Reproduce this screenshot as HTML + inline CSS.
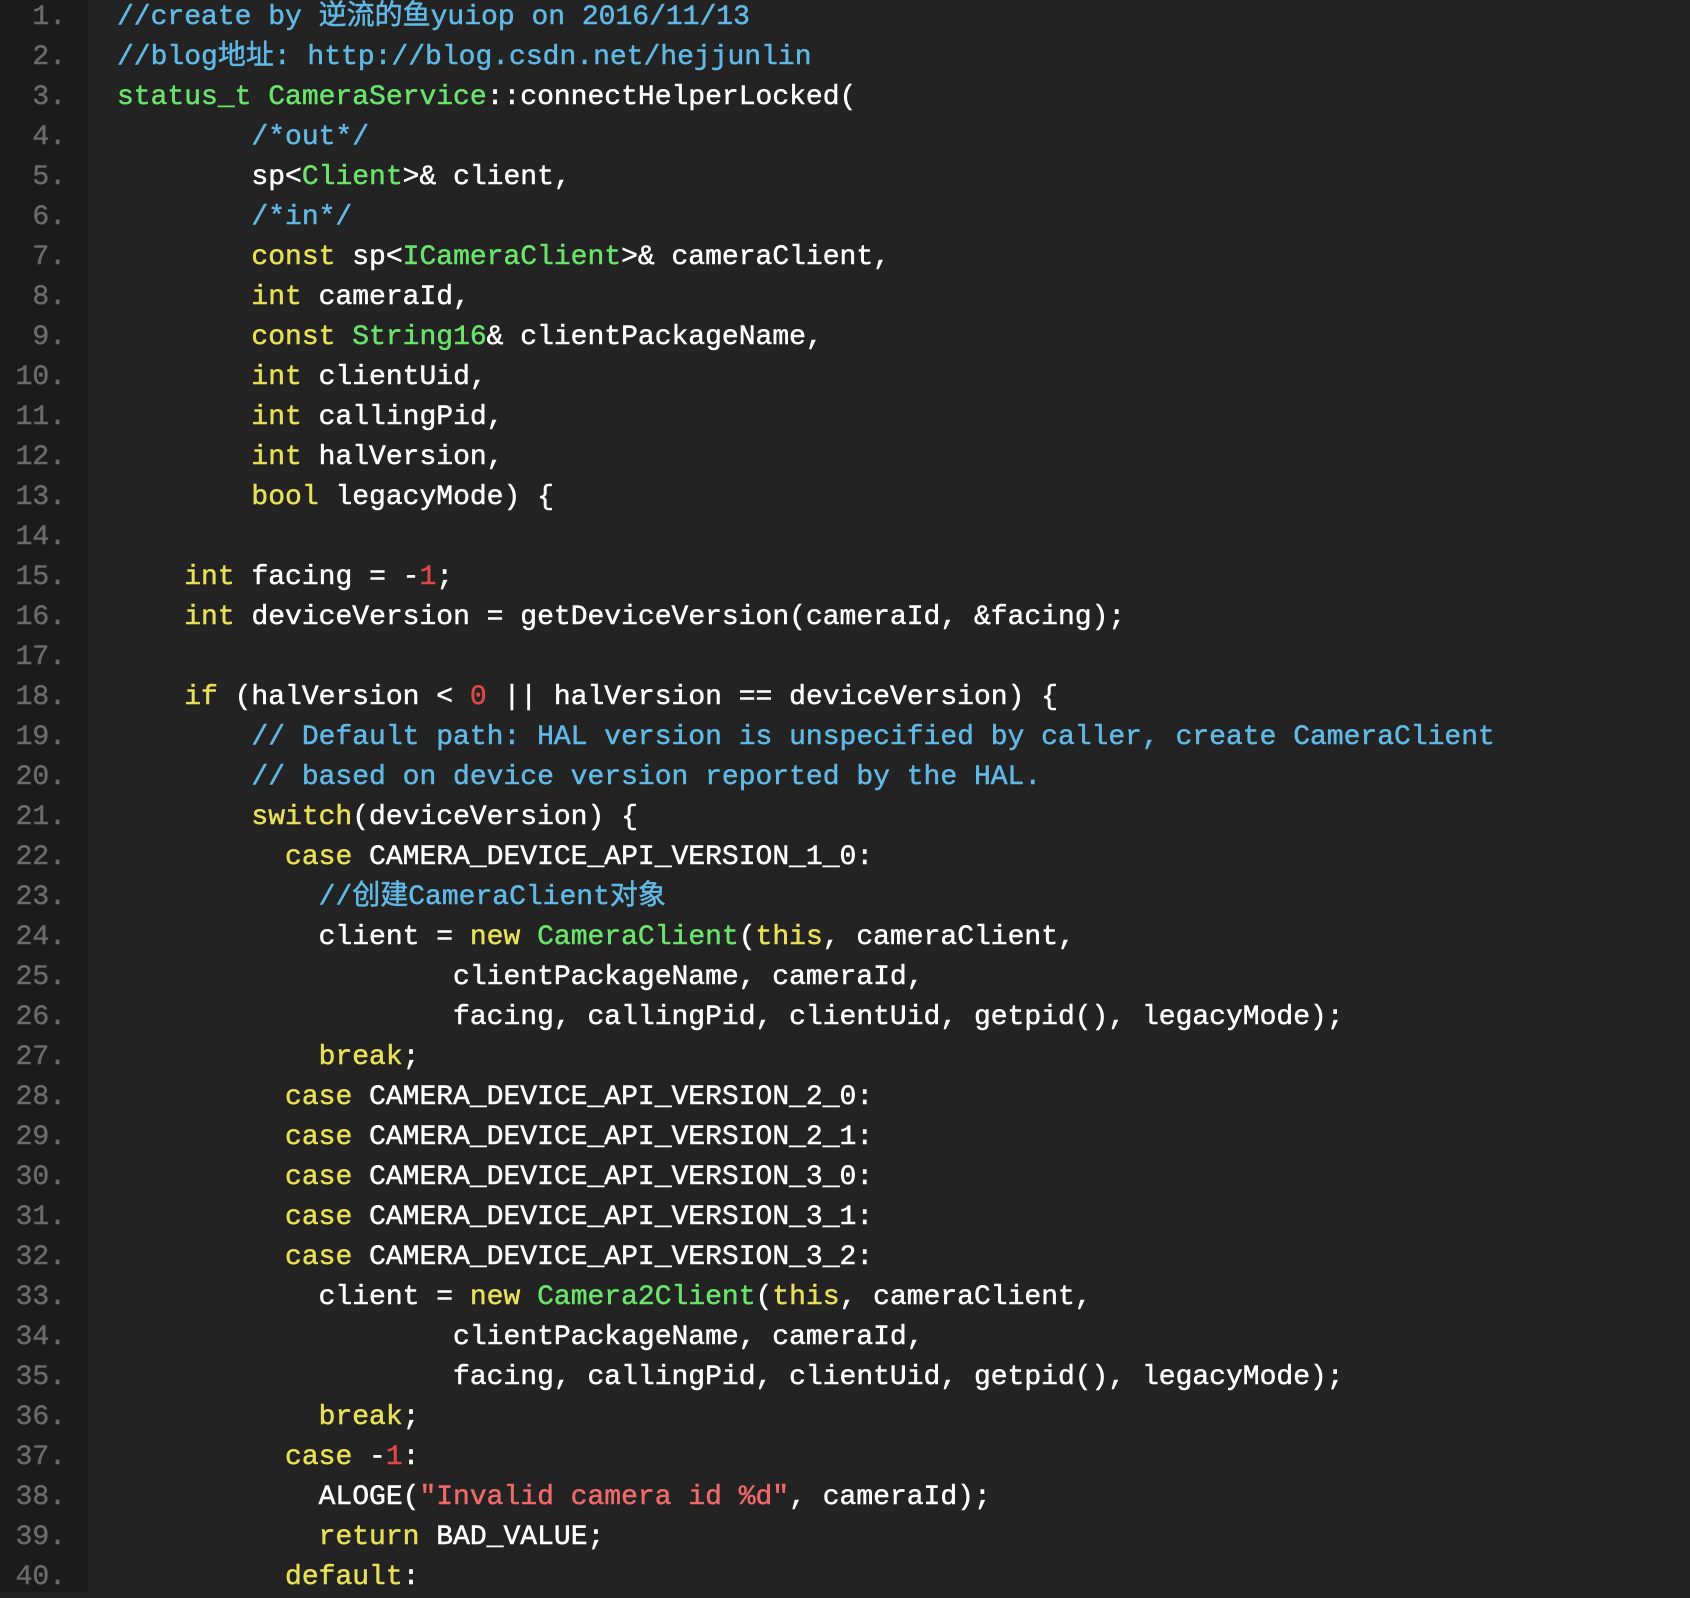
<!DOCTYPE html>
<html><head><meta charset="utf-8"><style>
html,body{margin:0;padding:0;width:1690px;height:1592px;overflow:hidden;background:#232323;}
.g{position:absolute;left:0;top:0;width:88px;height:1592px;background:#1b1b1b;}
.n{position:absolute;left:0;top:-2px;width:66px;text-align:right;color:#6a6a6a;}
.c{position:absolute;left:117px;top:-2px;color:#ffffff;}
pre{margin:0;font-family:"Liberation Mono","Noto Sans CJK SC",monospace;font-size:28px;line-height:40px;-webkit-text-stroke:0.5px currentColor;}
.m{color:#62b8e4}.t{color:#6be26b}.k{color:#e8e058}.r{color:#e04848}.s{color:#ee6a6a}
</style></head><body>
<div class="g"></div>
<pre class="n">1.
2.
3.
4.
5.
6.
7.
8.
9.
10.
11.
12.
13.
14.
15.
16.
17.
18.
19.
20.
21.
22.
23.
24.
25.
26.
27.
28.
29.
30.
31.
32.
33.
34.
35.
36.
37.
38.
39.
40.</pre>
<pre class="c"><span class="m">//create by 逆流的鱼yuiop on 2016/11/13</span>
<span class="m">//blog地址: http://blog.csdn.net/hejjunlin</span>
<span class="t">status_t CameraService</span>::connectHelperLocked(
        <span class="m">/*out*/</span>
        sp&lt;<span class="t">Client</span>&gt;&amp; client,
        <span class="m">/*in*/</span>
        <span class="k">const</span> sp&lt;<span class="t">ICameraClient</span>&gt;&amp; cameraClient,
        <span class="k">int</span> cameraId,
        <span class="k">const</span> <span class="t">String16</span>&amp; clientPackageName,
        <span class="k">int</span> clientUid,
        <span class="k">int</span> callingPid,
        <span class="k">int</span> halVersion,
        <span class="k">bool</span> legacyMode) {

    <span class="k">int</span> facing = -<span class="r">1</span>;
    <span class="k">int</span> deviceVersion = getDeviceVersion(cameraId, &amp;facing);

    <span class="k">if</span> (halVersion &lt; <span class="r">0</span> || halVersion == deviceVersion) {
        <span class="m">// Default path: HAL version is unspecified by caller, create CameraClient</span>
        <span class="m">// based on device version reported by the HAL.</span>
        <span class="k">switch</span>(deviceVersion) {
          <span class="k">case</span> CAMERA_DEVICE_API_VERSION_1_0:
            <span class="m">//创建CameraClient对象</span>
            client = <span class="k">new</span> <span class="t">CameraClient</span>(<span class="k">this</span>, cameraClient,
                    clientPackageName, cameraId,
                    facing, callingPid, clientUid, getpid(), legacyMode);
            <span class="k">break</span>;
          <span class="k">case</span> CAMERA_DEVICE_API_VERSION_2_0:
          <span class="k">case</span> CAMERA_DEVICE_API_VERSION_2_1:
          <span class="k">case</span> CAMERA_DEVICE_API_VERSION_3_0:
          <span class="k">case</span> CAMERA_DEVICE_API_VERSION_3_1:
          <span class="k">case</span> CAMERA_DEVICE_API_VERSION_3_2:
            client = <span class="k">new</span> <span class="t">Camera2Client</span>(<span class="k">this</span>, cameraClient,
                    clientPackageName, cameraId,
                    facing, callingPid, clientUid, getpid(), legacyMode);
            <span class="k">break</span>;
          <span class="k">case</span> -<span class="r">1</span>:
            ALOGE(<span class="s">"Invalid camera id %d"</span>, cameraId);
            <span class="k">return</span> BAD_VALUE;
          <span class="k">default</span>:</pre>
</body></html>
